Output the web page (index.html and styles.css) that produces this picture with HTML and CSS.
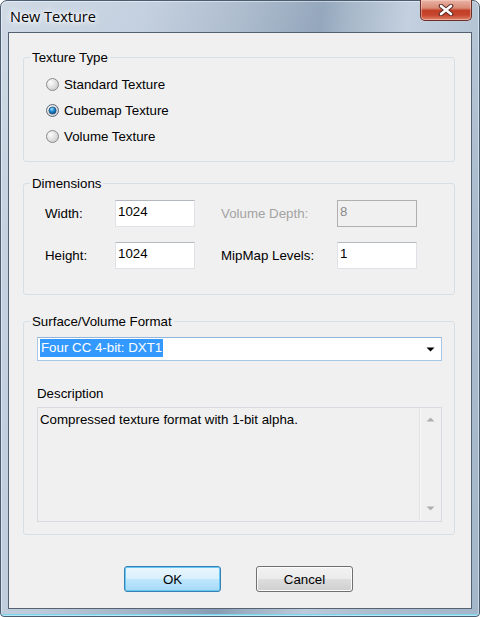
FILE: index.html
```html
<!DOCTYPE html>
<html>
<head>
<meta charset="utf-8">
<link rel="stylesheet" href="styles.css">
</head>
<body>
<div class="window">
  <div class="titlebar">
    <span class="title">New Texture</span>
    <div class="close">
      <svg width="16" height="12" viewBox="0 0 16 12">
        <path d="M3 2 L13 10 M13 2 L3 10" stroke="#5a2a24" stroke-width="4.6" stroke-linecap="round"/>
        <path d="M3 2 L13 10 M13 2 L3 10" stroke="#ffffff" stroke-width="2.6" stroke-linecap="round"/>
      </svg>
    </div>
  </div>
  <div class="client">
    <fieldset class="group g-type">
      <legend>Texture Type</legend>
      <div class="radios">
        <div class="radio">
          <svg class="rb" width="13" height="13" viewBox="0 0 13 13"><defs><radialGradient id="rg1" cx="0.35" cy="0.35" r="0.8"><stop offset="0" stop-color="#fdfdfd"/><stop offset="1" stop-color="#c6c6c6"/></radialGradient></defs><circle cx="6.5" cy="6.5" r="6" fill="url(#rg1)" stroke="#8a8c8f"/></svg>
          <span>Standard Texture</span>
        </div>
        <div class="radio">
          <svg class="rb" width="13" height="13" viewBox="0 0 13 13"><defs><radialGradient id="rg2" cx="0.35" cy="0.35" r="0.8"><stop offset="0" stop-color="#fdfdfd"/><stop offset="1" stop-color="#c6c6c6"/></radialGradient><radialGradient id="dot" cx="0.4" cy="0.3" r="0.8"><stop offset="0" stop-color="#9be0ff"/><stop offset="0.45" stop-color="#1f86cc"/><stop offset="1" stop-color="#0b3e74"/></radialGradient></defs><circle cx="6.5" cy="6.5" r="6" fill="url(#rg2)" stroke="#5d6a78"/><circle cx="6.5" cy="6.5" r="3.6" fill="url(#dot)" stroke="#1b4a78" stroke-width="0.7"/></svg>
          <span>Cubemap Texture</span>
        </div>
        <div class="radio">
          <svg class="rb" width="13" height="13" viewBox="0 0 13 13"><circle cx="6.5" cy="6.5" r="6" fill="url(#rg1)" stroke="#8a8c8f"/></svg>
          <span>Volume Texture</span>
        </div>
      </div>
    </fieldset>

    <fieldset class="group g-dim">
      <legend>Dimensions</legend>
      <div class="dims">
        <span class="lbl">Width:</span>
        <div class="edit">1024</div>
        <span class="lbl disabled">Volume Depth:</span>
        <div class="edit edit-disabled">8</div>
        <span class="lbl">Height:</span>
        <div class="edit">1024</div>
        <span class="lbl">MipMap Levels:</span>
        <div class="edit">1</div>
      </div>
    </fieldset>

    <fieldset class="group g-fmt">
      <legend>Surface/Volume Format</legend>
      <div class="fmt">
        <div class="combo">
          <span class="sel">Four CC 4-bit: DXT1</span>
          <svg class="arrow" width="9" height="5" viewBox="0 0 9 5"><path d="M0.5 0.5 H8.5 L4.5 4.5 Z" fill="#000"/></svg>
        </div>
        <div class="desc-label">Description</div>
        <div class="desc">
          <div class="desc-text">Compressed texture format with 1-bit alpha.</div>
          <div class="scroll">
            <svg width="9" height="5" viewBox="0 0 9 5"><path d="M4.5 0.5 L8.5 4.5 H0.5 Z" fill="#b0b0b0"/></svg>
            <svg width="9" height="5" viewBox="0 0 9 5"><path d="M0.5 0.5 H8.5 L4.5 4.5 Z" fill="#b0b0b0"/></svg>
          </div>
        </div>
      </div>
    </fieldset>

    <div class="buttons">
      <div class="btn btn-default">OK</div>
      <div class="btn">Cancel</div>
    </div>
  </div>
</div>
</body>
</html>
```

FILE: styles.css
```css
html, body {
  margin: 0;
  padding: 0;
  background: #ffffff;
}

body {
  width: 480px;
  height: 617px;
  overflow: hidden;
  font-family: "Liberation Sans", Arial, sans-serif;
  font-size: 13.3px;
  line-height: 15px;
  color: #000;
}

.window {
  width: 480px;
  height: 617px;
  box-sizing: border-box;
  border: 1px solid #4b5d70;
  border-radius: 7px 7px 4px 4px;
  background:
    linear-gradient(180deg, rgba(255,255,255,0.12) 0%, rgba(255,255,255,0) 40%),
    linear-gradient(100deg, #c9d5e2 0%, #bccadb 25%, #a2b3c7 42%, #879cb4 55%, #9cafc3 60%, #bccadb 70%, #acbdd0 82%, #a4b6ca 100%);
  box-shadow: inset 0 0 0 1px rgba(255,255,255,0.45), inset 0 -2px 0 #7fd3ec;
  display: flex;
  flex-direction: column;
}

.titlebar {
  height: 31px;
  display: flex;
  justify-content: space-between;
  align-items: flex-start;
}

.title {
  font-family: "Open Sans", "Noto Sans", sans-serif;
  font-size: 14.5px;
  line-height: 20px;
  margin: 6px 0 0 9px;
  color: #000;
  text-shadow: 0 0 6px #fff, 0 0 10px #fff, 0 0 3px #fff;
}

.close {
  width: 52px;
  height: 21px;
  margin: -1px 7px 0 0;
  box-sizing: border-box;
  border: 1px solid #6b2e28;
  border-top: none;
  border-radius: 0 0 5px 5px;
  background: linear-gradient(180deg, #e9b3a5 0%, #d98b76 40%, #c43f28 52%, #c5452d 75%, #e0846a 100%);
  box-shadow: inset 0 0 0 1px rgba(255,220,210,0.45);
  display: flex;
  align-items: center;
  justify-content: center;
}

.client {
  flex: 1;
  margin: 0 7px 7px 7px;
  border: 1px solid #556270;
  background: #f0f0f0;
  padding: 0 16px 0 14px;
  display: flex;
  flex-direction: column;
}

.group {
  margin: 0;
  padding: 0;
  border: 1px solid #d5dfe5;
  border-radius: 3px;
  min-inline-size: 0;
}

.group legend {
  margin-left: 6px;
  padding: 0 2px;
  line-height: 15px;
}

.g-type { margin-top: 17px; }
.g-dim { margin-top: 14px; }
.g-fmt { margin-top: 19px; }

.radios {
  padding: 6px 0 12px 22px;
  display: flex;
  flex-direction: column;
}

.radio {
  height: 26px;
  display: flex;
  align-items: center;
  gap: 5px;
}

.rb { display: block; flex: none; }

.dims {
  padding: 9px 0 25px 21px;
  display: grid;
  grid-template-columns: 70px 80px 142px 80px;
  grid-auto-rows: 27px;
  row-gap: 15px;
  align-items: center;
}

.dims .lbl:nth-child(3), .dims .lbl:nth-child(7) {
  margin-left: 26px;
}

.lbl { line-height: 15px; }
.lbl.disabled { color: #a3a3a3; }

.edit {
  height: 27px;
  box-sizing: border-box;
  border: 1px solid #dfe3e8;
  border-top-color: #b4b8bf;
  background: #fff;
  padding: 3px 2px 0 2px;
}

.edit-disabled {
  background: #f0f0f0;
  border: 1px solid #afafaf;
  color: #8a8a8a;
}

.fmt {
  padding: 8px 12px 12px 13px;
  display: flex;
  flex-direction: column;
}

.combo {
  height: 24px;
  box-sizing: border-box;
  border: 1px solid #a7c7e6;
  border-top-color: #8fb5dd;
  background: #fff;
  padding: 1px 6px 0 2px;
  display: flex;
  align-items: flex-start;
  justify-content: space-between;
}

.sel {
  background: #3399ff;
  color: #fff;
  line-height: 18px;
  height: 18px;
  padding: 0 1px;
}

.arrow {
  display: block;
  margin-top: 8px;
}

.desc-label {
  margin-top: 25px;
  margin-bottom: 6px;
  line-height: 15px;
}

.desc {
  height: 115px;
  box-sizing: border-box;
  border: 1px solid #d7dbe0;
  background: #f0f0f0;
  display: flex;
}

.desc-text {
  flex: 1;
  padding: 4px 2px 0 2px;
}

.scroll {
  width: 20px;
  margin: 0 1px 0 0;
  border-left: 1px solid #e2e2e2;
  box-shadow: inset 1px 0 0 #f8f8f8;
  display: flex;
  flex-direction: column;
  justify-content: space-between;
  align-items: center;
  padding: 9px 0 10px 0;
}

.scroll svg { display: block; }

.buttons {
  margin-top: 31px;
  padding-left: 101px;
  display: flex;
  gap: 35px;
}

.btn {
  width: 97px;
  height: 26px;
  box-sizing: border-box;
  border: 1px solid #707070;
  border-radius: 3px;
  background: linear-gradient(180deg, #f2f2f2 0%, #ebebeb 48%, #dddddd 52%, #cfcfcf 100%);
  box-shadow: inset 0 0 0 1px #fbfbfb;
  display: flex;
  align-items: center;
  justify-content: center;
  line-height: 15px;
}

.btn-default {
  border-color: #3c7fb1;
  background: linear-gradient(180deg, #eaf6fd 0%, #d9f0fc 48%, #bee6fd 52%, #a7d9f5 100%);
  box-shadow: inset 0 0 0 1px #62c9f5;
}
```
